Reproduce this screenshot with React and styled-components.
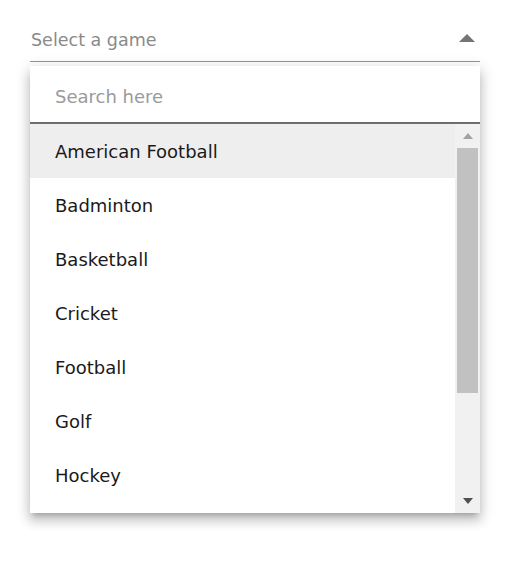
import React from 'react'
import styled, { createGlobalStyle } from 'styled-components'

const games = [
    'American Football',
    'Badminton',
    'Basketball',
    'Cricket',
    'Football',
    'Golf',
    'Hockey',
]

function App() {
    return (
        <Page>
            <GlobalStyle />
            <Trigger>
                <Placeholder>Select a game</Placeholder>
                <Caret viewBox="0 0 16 8">
                    <path d="M0 8 L8 0 L16 8 Z" />
                </Caret>
            </Trigger>
            <Popup>
                <Search placeholder="Search here" />
                <ListWrap>
                    <List>
                        {games.map((g, i) => (
                            <Item key={g} active={i === 0}>{g}</Item>
                        ))}
                    </List>
                    <Scrollbar>
                        <ScrollButton>
                            <svg width="10" height="6" viewBox="0 0 10 6"><path d="M0 6 L5 0 L10 6 Z" fill="#a3a3a3" /></svg>
                        </ScrollButton>
                        <Thumb />
                        <ScrollButton>
                            <svg width="10" height="6" viewBox="0 0 10 6"><path d="M0 0 L5 6 L10 0 Z" fill="#505050" /></svg>
                        </ScrollButton>
                    </Scrollbar>
                </ListWrap>
            </Popup>
        </Page>
    )
}

export default App

const GlobalStyle = createGlobalStyle`
    body {
        margin: 0;
        background: #fff;
        font-family: "Comic Sans MS", "DejaVu Sans", sans-serif;
    }
`

const Page = styled.div`
    padding: 18px 30px;
    width: 450px;
`

const Trigger = styled.div`
    height: 43px;
    display: flex;
    align-items: center;
    justify-content: space-between;
    border-bottom: 1px solid #949494;
    padding: 0 5px 0 1px;
`

const Placeholder = styled.span`
    font-size: 17.5px;
    color: #8a8a8a;
`

const Caret = styled.svg`
    width: 16px;
    height: 8px;
    fill: #757575;
    margin-top: -3px;
`

const Popup = styled.div`
    margin-top: 4px;
    background: #fff;
    box-shadow: 0 5px 5px -3px rgba(0, 0, 0, 0.2), 0 8px 10px 1px rgba(0, 0, 0, 0.14), 0 3px 14px 2px rgba(0, 0, 0, 0.12);
`

const Search = styled.input`
    display: block;
    width: 100%;
    box-sizing: border-box;
    height: 57px;
    border: none;
    border-bottom: 1px solid #6b6b6b;
    box-shadow: 0 1px 0 #e0386e;
    outline: none;
    padding: 4px 25px 0;
    font-family: inherit;
    font-size: 18px;
    color: #222;

    &::placeholder {
        color: #9a9a9a;
    }
`

const ListWrap = styled.div`
    display: flex;
    height: 389px;
    overflow: hidden;
    margin-top: 1px;
`

const List = styled.div`
    flex: 1;
`

const Item = styled.div`
    height: 54px;
    display: flex;
    align-items: center;
    padding-left: 25px;
    font-size: 18px;
    color: #1a1a1a;
    background: ${p => (p.active ? '#eeeeee' : '#fff')};
`

const Scrollbar = styled.div`
    width: 25px;
    background: #f1f1f1;
    display: flex;
    flex-direction: column;
`

const ScrollButton = styled.div`
    height: 24px;
    display: flex;
    align-items: center;
    justify-content: center;
`

const Thumb = styled.div`
    height: 245px;
    margin: 0 2px 0 2px;
    background: #c1c1c1;
    flex: none;
    margin-bottom: auto;
`
